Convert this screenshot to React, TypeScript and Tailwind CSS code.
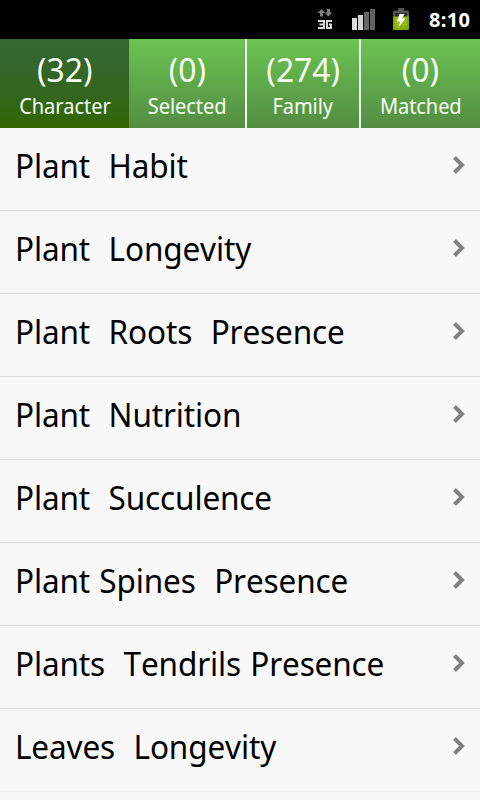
import clsx from "clsx";

const tabs = [
    { count: 32, label: 'Character', className: 'w-[129px] bg-linear-to-b from-[#336633] to-[#336600]' },
    { count: 0, label: 'Selected', className: 'w-[118px] border-r-2 border-[#f4fbf2] bg-linear-to-b from-[#6bc452] to-[#538d42]' },
    { count: 274, label: 'Family', className: 'w-[114px] border-r-2 border-[#f4fbf2] bg-linear-to-b from-[#6bc452] to-[#538d42]' },
    { count: 0, label: 'Matched', className: 'w-[119px] bg-linear-to-b from-[#6bc452] to-[#538d42]' },
];

const characters = [
    'Plant  Habit',
    'Plant  Longevity',
    'Plant  Roots  Presence',
    'Plant  Nutrition',
    'Plant  Succulence',
    'Plant Spines  Presence',
    'Plants  Tendrils Presence',
    'Leaves  Longevity',
];

const NetworkIcon = () => {
    return (
        <svg className='w-4 h-[22px] shrink-0' viewBox='0 0 16 22' fill='none'>
            <path d='M4.5 1L8.5 5H6V8.5H3V5H0.5Z' fill='#808080' />
            <path d='M11.5 8.5L7.5 4.5H10V1H13V4.5H15.5Z' fill='#808080' />
            <path d='M1 13H7V20H1M2.5 16.5H7' stroke='#d8d8d8' strokeWidth='2' />
            <path d='M15 13H10V20H14V16.5H12' stroke='#d8d8d8' strokeWidth='2' />
        </svg>
    );
};

const SignalIcon = () => {
    return (
        <svg className='w-6 h-[22px] shrink-0' viewBox='0 0 24 22'>
            <rect x='0' y='9' width='5' height='12' fill='#dedede' />
            <rect x='6' y='6' width='5' height='15' fill='#d4d4d4' />
            <rect x='12' y='3' width='5' height='18' fill='#666666' />
            <rect x='18' y='0' width='5' height='21' fill='#626262' />
        </svg>
    );
};

const BatteryIcon = () => {
    return (
        <svg className='w-4 h-[23px] shrink-0' viewBox='0 0 16 23'>
            <path d='M5 0H11V2.5H14.5Q16 2.5 16 4V9H0V4Q0 2.5 1.5 2.5H5Z' fill='#555555' />
            <path d='M2 5H14V9H2Z' fill='#2c2c2c' />
            <path d='M0 8.5H16V20.5Q16 22 14.5 22H1.5Q0 22 0 20.5Z' fill='#83ab08' />
            <path d='M2 9H14V17L2 20Z' fill='#93bc0d' />
            <path d='M6.5 6H11.5L9.3 10.5H12.5L5.3 19.5L7.2 13.5H4Z' fill='#ffffff' />
        </svg>
    );
};

const StatusBar = () => {
    return (
        <div className='flex h-[39px] shrink-0 items-start bg-black pl-[317px] pt-2'>
            <NetworkIcon />
            <div className='ml-[19px] mt-px flex'><SignalIcon /></div>
            <div className='ml-[17px] flex'><BatteryIcon /></div>
            <p className='ml-5 text-[20px] leading-6 tracking-[0.3px] font-bold text-white'>8:10</p>
        </div>
    );
};

const TabBar = () => {
    return (
        <div className='flex h-[89px] shrink-0'>
            {tabs.map((tab) => (
                <button key={tab.label} className={clsx('flex shrink-0 flex-col items-center pt-2 whitespace-nowrap text-[#f6fff2]', tab.className)}>
                    <span className='text-[33px] leading-[46px] scale-x-[0.965]'>({tab.count})</span>
                    <span className='text-[21px] leading-[26px] tracking-[-0.1px] scale-x-[0.955] [font-kerning:none]'>{tab.label}</span>
                </button>
            ))}
        </div>
    );
};

const Chevron = () => {
    return (
        <svg className='w-3.5 h-5 shrink-0' viewBox='0 0 14 20' fill='none'>
            <path d='M2.5 2.5L10 10L2.5 17.5' stroke='#828282' strokeWidth='4' />
        </svg>
    );
};

const CharacterList = () => {
    return (
        <ul className='flex flex-col'>
            {characters.map((name) => (
                <li key={name} className='flex h-[83px] shrink-0 items-center justify-between border-b border-[#dcdcdc] pr-3.5 pb-2 pl-[15px] last:border-[#ebebeb]'>
                    <p className='pt-0.5 text-[33px] leading-[46px] tracking-[-0.15px] [word-spacing:1.3px] [font-kerning:none] origin-left scale-x-[0.955] whitespace-pre text-black'>{name}</p>
                    <Chevron />
                </li>
            ))}
        </ul>
    );
};

export default function App() {
    return (
        <div className='flex h-screen w-[480px] flex-col overflow-hidden bg-[#f8f8f8] font-["Noto_Sans",sans-serif]'>
            <StatusBar />
            <TabBar />
            <CharacterList />
        </div>
    );
}
